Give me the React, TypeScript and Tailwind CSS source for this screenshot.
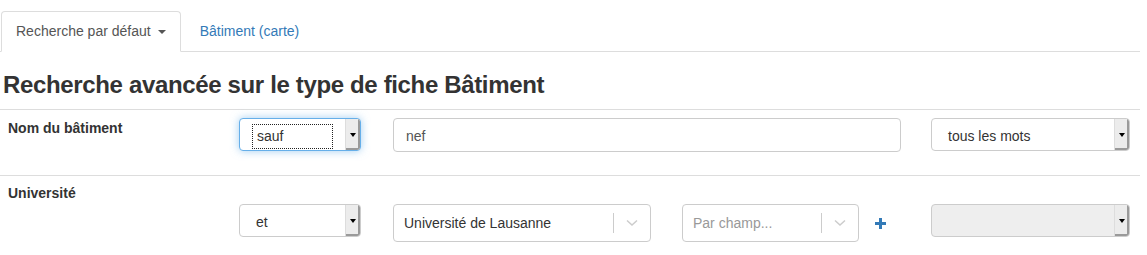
import React from 'react';

const font = { fontFamily: '"Liberation Sans", Arial, sans-serif' };

function NativeSelect({
  value,
  width,
  focused = false,
  disabled = false,
}: {
  value?: string;
  width: string;
  focused?: boolean;
  disabled?: boolean;
}) {
  return (
    <div
      className={`flex h-[33px] ${width} rounded-[4px] border ${
        focused
          ? 'border-[#66afe9] shadow-[0_0_8px_rgba(102,175,233,0.6)]'
          : 'border-[#ccc]'
      } ${disabled ? 'bg-[#eee]' : 'bg-white'} overflow-hidden`}
    >
      <div className="flex flex-1 items-center pt-[4px] pl-[12px] pr-[12px]">
        {value && (
          <span
            className={`px-[4px] py-[1px] text-[14px] text-[#333] ${
              focused ? 'flex-1 border border-dotted border-[#222]' : ''
            }`}
          >
            {value}
          </span>
        )}
      </div>
      <div className="flex w-[15px] items-center justify-center border-l border-[#ddd] bg-[#ececec] shadow-[inset_-2px_-2px_0_#9a9a9a]">
        <div className="h-0 w-0 border-x-[3px] border-t-[4px] border-x-transparent border-t-black" />
      </div>
    </div>
  );
}

function Select2({
  value,
  placeholder,
  width,
}: {
  value?: string;
  placeholder?: string;
  width: string;
}) {
  return (
    <div
      className={`flex h-[38px] ${width} items-center rounded-[4px] border border-[#ccc] bg-white`}
    >
      <span
        className={`flex-1 pl-[10px] text-[14px] ${
          value ? 'text-[#333]' : 'text-[#999]'
        }`}
      >
        {value ?? placeholder}
      </span>
      <div className="h-[20px] w-px bg-[#ccc]" />
      <div className="flex w-[36px] items-center justify-center">
        <svg width="12" height="8" viewBox="0 0 12 8">
          <path d="M1 1.5 L6 6 L11 1.5" fill="none" stroke="#ccc" strokeWidth="1.5" />
        </svg>
      </div>
    </div>
  );
}

export default function App() {
  return (
    <div className="w-[1140px] bg-white pt-[11px]" style={font}>
      <div className="flex border-b border-[#ddd]">
        <div className="-mb-px ml-[1px] flex h-[41px] items-center gap-[7px] rounded-t-[4px] border border-[#ddd] border-b-white bg-white px-[14px] text-[14px] text-[#555]">
          Recherche par défaut
          <span className="mt-[1px] h-0 w-0 border-x-[4px] border-t-[4px] border-x-transparent border-t-[#555]" />
        </div>
        <div className="ml-[4px] flex h-[40px] items-center px-[15px] text-[14px] font-medium text-[#337ab7]">
          Bâtiment (carte)
        </div>
      </div>

      <h3 className="mt-[20px] mb-[11px] pl-[3px] text-[24px] font-bold leading-[26px] tracking-[-0.35px] text-[#333]">
        Recherche avancée sur le type de fiche Bâtiment
      </h3>

      <div className="border-t border-[#ddd]">
        <div className="flex items-start pt-[8px] pb-[23px]">
          <div className="w-[239px] pt-[1px] pl-[8px] text-[14px] font-bold leading-[18px] text-[#333]">
            Nom du bâtiment
          </div>
          <NativeSelect value="sauf" width="w-[122px]" focused />
          <div className="ml-[32px] flex h-[34px] w-[508px] items-center rounded-[4px] border border-[#ccc] bg-white pt-[3px] pl-[12px] text-[14px] text-[#555]">
            nef
          </div>
          <div className="ml-[30px]">
            <NativeSelect value="tous les mots" width="w-[199px]" />
          </div>
        </div>
      </div>

      <div className="border-t border-[#ddd]">
        <div className="flex items-start pt-[8px] pb-[13px]">
          <div className="w-[239px] pl-[8px] text-[14px] font-bold leading-[18px] text-[#333]">
            Université
          </div>
          <div className="mt-[20px] flex items-start">
            <NativeSelect value="et" width="w-[122px]" />
            <div className="ml-[32px]">
              <Select2 value="Université de Lausanne" width="w-[258px]" />
            </div>
            <div className="ml-[31px]">
              <Select2 placeholder="Par champ..." width="w-[177px]" />
            </div>
            <div className="flex h-[38px] w-[72px] items-center pl-[16px]">
              <svg width="11" height="11" viewBox="0 0 11 11">
                <path d="M4 0 H7 V4 H11 V7 H7 V11 H4 V7 H0 V4 H4 Z" fill="#337ab7" />
              </svg>
            </div>
            <NativeSelect width="w-[199px]" disabled />
          </div>
        </div>
      </div>
    </div>
  );
}
